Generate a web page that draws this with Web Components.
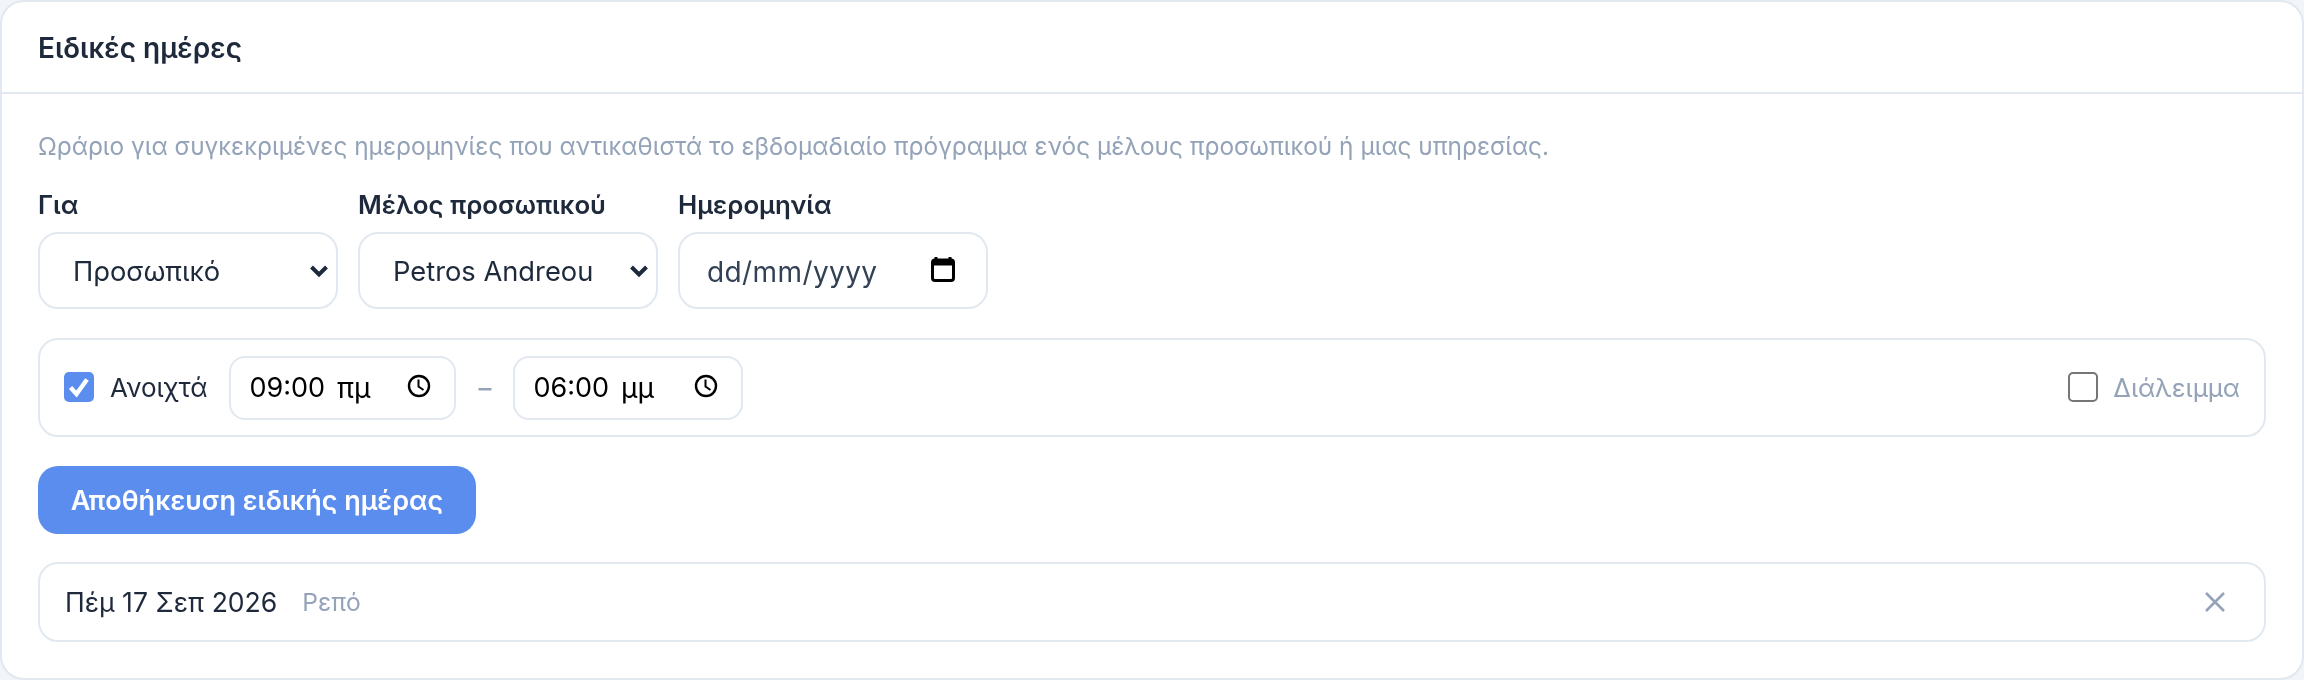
<!DOCTYPE html>
<html lang="el">
<head>
<meta charset="utf-8">
<title>Ειδικές ημέρες</title>
<style>
    html, body { margin: 0; height: 100%; }
    body {
        background: #f1f5f9;
        font-family: Inter, "Noto Sans", sans-serif;
        color: #1e293b;
    }
</style>
</head>
<body>

<special-days-card heading="Ειδικές ημέρες">
    <p-text>Ωράριο για συγκεκριμένες ημερομηνίες που αντικαθιστά το εβδομαδιαίο πρόγραμμα ενός μέλους προσωπικού ή μιας υπηρεσίας.</p-text>

    <form-row>
        <form-field label="Για" width="300"><select-box value="Προσωπικό"></select-box></form-field>
        <form-field label="Μέλος προσωπικού" width="300"><select-box value="Petros Andreou"></select-box></form-field>
        <form-field label="Ημερομηνία" width="310"><date-box value="dd/mm/yyyy"></date-box></form-field>
    </form-row>

    <hours-row>
        <check-box checked label="Ανοιχτά"></check-box>
        <time-box slot="times" value="09:00" period="πμ" width="227"></time-box>
        <span slot="times" style="color:#94a3b8;font-size:26px;font-weight:500;width:57px;text-align:center">–</span>
        <time-box slot="times" value="06:00" period="μμ" width="230"></time-box>
        <check-box slot="end" muted label="Διάλειμμα"></check-box>
    </hours-row>

    <primary-button>Αποθήκευση ειδικής ημέρας</primary-button>

    <special-entry date="Πέμ 17 Σεπ 2026" note="Ρεπό"></special-entry>
</special-days-card>

<script>
// shared icons
const ICONS = {
    chevron: `<svg width="20" height="14" viewBox="0 0 20 14" fill="none" stroke="#1e293b" stroke-width="4"><path d="M2.5 3l7.5 7.5L17.5 3"/></svg>`,
    calendar: `<svg width="24" height="26" viewBox="0 0 24 26" fill="none"><path d="M5 1v4M19 1v4" stroke="#000" stroke-width="3"/><rect x="1.5" y="4" width="21" height="20.5" rx="2.5" stroke="#000" stroke-width="3"/><rect x="1.5" y="4" width="21" height="5.5" fill="#000"/></svg>`,
    clock: `<svg width="24" height="24" viewBox="0 0 24 24" fill="none" stroke="#000"><circle cx="12" cy="12" r="10" stroke-width="2.4"/><path d="M11.5 5.5v7l5 3.5" stroke-width="2"/></svg>`,
    close: `<svg width="22" height="22" viewBox="0 0 22 22" fill="none" stroke="#94a3b8" stroke-width="2.6"><path d="M2 2l18 18M20 2L2 20"/></svg>`,
    tick: `<svg width="30" height="30" viewBox="0 0 30 30" fill="none" stroke="#fff" stroke-width="4.4"><path d="M6.5 15.5l6 6.5L23 7.5"/></svg>`
};

function shadow(el, html) {
    el.attachShadow({ mode: "open" }).innerHTML = html;
}

class SpecialDaysCard extends HTMLElement {
    connectedCallback() {
        shadow(this, `
        <style>
            :host { display: block; box-sizing: border-box; height: 680px; background: #fff; border: 2px solid #e2e8f0; border-radius: 24px; overflow: hidden; will-change: transform; }
            header { height: 88px; padding: 2px 36px 0; border-bottom: 2px solid #e2e8f0; display: flex; align-items: center; font-size: 28px; font-weight: 600; color: #1e293b; }
            main { padding: 33px 36px 0; display: flex; flex-direction: column; }
        </style>
        <header>${this.getAttribute("heading")}</header>
        <main><slot></slot></main>`);
    }
}

class PText extends HTMLElement {
    connectedCallback() {
        shadow(this, `
        <style>:host { display: block; font-size: 24.4px; line-height: 38px; color: #94a3b8; }</style>
        <slot></slot>`);
    }
}

class FormRow extends HTMLElement {
    connectedCallback() {
        shadow(this, `
        <style>:host { display: flex; gap: 20px; margin-top: 23px; }</style>
        <slot></slot>`);
    }
}

class FormField extends HTMLElement {
    connectedCallback() {
        shadow(this, `
        <style>
            :host { display: flex; flex-direction: column; width: ${this.getAttribute("width")}px; }
            label { font-size: 25.8px; font-weight: 600; line-height: 34px; margin-bottom: 10px; color: #1e293b; }
        </style>
        <label>${this.getAttribute("label")}</label>
        <slot></slot>`);
    }
}

const boxStyle = `
    :host { display: flex; align-items: center; box-sizing: border-box; height: 77px; border: 2px solid #e2e8f0; border-radius: 20px; background: #fff; font-size: 27.3px; color: #1e293b; }
    span { padding-top: 2px; }
`;

class SelectBox extends HTMLElement {
    connectedCallback() {
        shadow(this, `
        <style>
            ${boxStyle}
            :host { padding: 0 7px 0 33px; justify-content: space-between; }
            svg { display: block; }
        </style>
        <span>${this.getAttribute("value")}</span>${ICONS.chevron}`);
    }
}

class DateBox extends HTMLElement {
    connectedCallback() {
        shadow(this, `
        <style>
            ${boxStyle}
            :host { padding: 0 31px 0 27px; justify-content: space-between; color: #334155; font-size: 28px; letter-spacing: 0.4px; }
            svg { display: block; margin-top: -4px; }
        </style>
        <span>${this.getAttribute("value")}</span>${ICONS.calendar}`);
    }
}

class TimeBox extends HTMLElement {
    connectedCallback() {
        shadow(this, `
        <style>
            :host { display: flex; align-items: center; box-sizing: border-box; width: ${this.getAttribute("width")}px; height: 64px; padding: 0 23px 0 18px; border: 2px solid #e2e8f0; border-radius: 16px; background: #fff; font-size: 27px; color: #000; }
            .period { margin-left: 12px; flex: 1; font-size: 28px; }
            svg { display: block; margin-top: -3px; }
        </style>
        <span>${this.getAttribute("value")}</span><span class="period">${this.getAttribute("period")}</span>${ICONS.clock}`);
    }
}

class CheckBox extends HTMLElement {
    connectedCallback() {
        const on = this.hasAttribute("checked");
        const muted = this.hasAttribute("muted");
        shadow(this, `
        <style>
            :host { display: inline-flex; align-items: center; gap: ${muted ? 15 : 16}px; font-size: ${muted ? 25.8 : 26}px; color: ${muted ? "#94a3b8" : "#1e293b"}; }
            .tick { box-sizing: border-box; width: 30px; height: 30px; border-radius: 5px; margin-top: -2px; }
            .on { background: #5b8def; }
            .off { background: #fff; border: 2px solid #767676; }
            svg { display: block; }
        </style>
        <span class="tick ${on ? "on" : "off"}">${on ? ICONS.tick : ""}</span><span>${this.getAttribute("label")}</span>`);
    }
}

class HoursRow extends HTMLElement {
    connectedCallback() {
        shadow(this, `
        <style>
            :host { display: flex; align-items: center; box-sizing: border-box; height: 99px; margin-top: 29px; padding: 0 24px; border: 2px solid #e2e8f0; border-radius: 20px; }
            .times { display: flex; align-items: center; margin-left: 22px; flex: 1; }
            ::slotted([slot="end"]) { margin-left: auto; }
        </style>
        <slot></slot>
        <div class="times"><slot name="times"></slot></div>
        <slot name="end"></slot>`);
    }
}

class PrimaryButton extends HTMLElement {
    connectedCallback() {
        shadow(this, `
        <style>
            :host { display: block; margin-top: 29px; }
            button { display: block; box-sizing: border-box; width: 438px; height: 68px; padding: 0; border: 0; border-radius: 20px; background: #5b8def; color: #fff; font: 600 27px Inter, sans-serif; }
        </style>
        <button><slot></slot></button>`);
    }
}

class SpecialEntry extends HTMLElement {
    connectedCallback() {
        shadow(this, `
        <style>
            :host { display: flex; align-items: center; box-sizing: border-box; height: 80px; margin-top: 28px; padding: 0 38px 0 25px; border: 2px solid #e2e8f0; border-radius: 20px; font-size: 26.6px; color: #1e293b; }
            .note { margin-left: 25px; font-size: 24.6px; color: #94a3b8; flex: 1; }
            svg { display: block; }
        </style>
        <span>${this.getAttribute("date")}</span><span class="note">${this.getAttribute("note")}</span>${ICONS.close}`);
    }
}

customElements.define("special-days-card", SpecialDaysCard);
customElements.define("p-text", PText);
customElements.define("form-row", FormRow);
customElements.define("form-field", FormField);
customElements.define("select-box", SelectBox);
customElements.define("date-box", DateBox);
customElements.define("time-box", TimeBox);
customElements.define("check-box", CheckBox);
customElements.define("hours-row", HoursRow);
customElements.define("primary-button", PrimaryButton);
customElements.define("special-entry", SpecialEntry);
</script>
</body>
</html>
